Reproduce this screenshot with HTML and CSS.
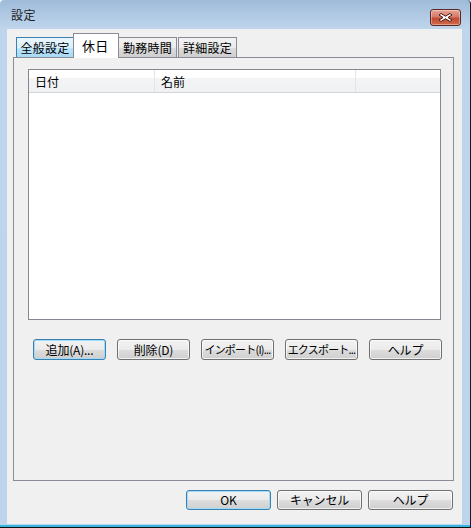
FILE: index.html
```html
<!DOCTYPE html>
<html lang="ja">
<head>
<meta charset="utf-8">
<title>設定</title>
<link rel="stylesheet" href="styles.css">
</head>
<body>
<div class="window">
  <div class="titlebar">
    <span class="title">設定</span>
    <div class="close">
      <svg width="17" height="11" viewBox="0 0 17 11">
        <path d="M4 1.5 L8.5 4.2 L13 1.5 L15 3 L11 5.5 L15 8 L13 9.5 L8.5 6.8 L4 9.5 L2 8 L6 5.5 L2 3 Z" fill="#fff" stroke="#4a1a14" stroke-width="1" stroke-linejoin="round"/>
      </svg>
    </div>
  </div>
  <div class="client">
    <div class="tabs">
      <div class="tab hot">全般設定</div>
      <div class="tab active">休日</div>
      <div class="tab">勤務時間</div>
      <div class="tab">詳細設定</div>
    </div>
    <div class="panel">
      <div class="listview">
        <div class="header">
          <div class="col c1">日付</div>
          <div class="col c2">名前</div>
          <div class="col c3"></div>
        </div>
      </div>
      <div class="btnrow">
        <button class="btn default">追加(A)...</button>
        <button class="btn">削除(D)</button>
        <button class="btn tight">インポート(I)...</button>
        <button class="btn tight">エクスポート...</button>
        <button class="btn">ヘルプ</button>
      </div>
    </div>
    <div class="footer">
      <button class="btn wide default">OK</button>
      <button class="btn wide">キャンセル</button>
      <button class="btn wide">ヘルプ</button>
    </div>
  </div>
</div>
</body>
</html>
```
FILE: styles.css
```css
* { box-sizing: border-box; }
html, body { margin: 0; padding: 0; }
body {
  font-family: "Noto Sans CJK JP", "Noto Sans", sans-serif;
  font-size: 12px;
  color: #000;
  background: #fff;
}
.window {
  width: 471px;
  height: 528px;
  display: flex;
  flex-direction: column;
  background: linear-gradient(to bottom, #9fbbd9 0px, #b3cce6 18px, #bfd5ec 29px, #bcd4ec 100%);
  border-right: 1px solid #1a1a1a;
  border-bottom: 1px solid #111;
  border-top-left-radius: 4px;
  border-top-right-radius: 4px;
  box-shadow: inset 0 -2px 0 #36b6e0;
}
.titlebar {
  height: 29px;
  display: flex;
  align-items: flex-start;
  justify-content: space-between;
  padding: 0 9px 0 11px;
}
.title {
  margin-top: 6px;
  font-size: 12px;
  color: #1e1e1e;
  letter-spacing: 0.5px;
}
.close {
  margin-top: 9px;
  width: 31px;
  height: 17px;
  border: 1px solid #5c2a22;
  border-radius: 3px;
  background: linear-gradient(to bottom, #e8a496 0%, #d57a68 45%, #c24a32 55%, #cf6a4c 100%);
  box-shadow: inset 0 0 0 1px rgba(255,255,255,0.35);
  display: flex;
  align-items: center;
  justify-content: center;
}
.client {
  margin: 0 8px 3px 7px;
  height: 495px;
  background: #f0f0f0;
  display: flex;
  flex-direction: column;
}
.tabs {
  display: flex;
  align-items: flex-end;
  height: 28px;
  padding-left: 9px;
  position: relative;
  z-index: 1;
}
.tab {
  height: 20px;
  padding: 0;
  display: flex;
  align-items: center;
  justify-content: center;
  border: 1px solid #898c95;
  border-bottom: none;
  background: linear-gradient(to bottom, #f2f2f2 0%, #ebebeb 50%, #dddddd 51%, #cfcfcf 100%);
  font-size: 12px;
  letter-spacing: 0.3px;
  white-space: nowrap;
}
.tab + .tab { margin-left: -1px; }
.tab:nth-child(1) { width: 58px; }
.tab:nth-child(2) { width: 46px; }
.tab:nth-child(3) { width: 59px; }
.tab:nth-child(4) { width: 59px; margin-left: 1px; }
.tab.hot {
  border-color: #3c7fb1;
  background: linear-gradient(to bottom, #eaf6fd 0%, #d9f0fc 50%, #bee6fd 51%, #a7d9f5 100%);
}
.tab.active {
  background: #fff;
  border-color: #898c95;
  margin-bottom: -1px;
  height: 25px;
  align-items: flex-start;
  padding-top: 2px;
  justify-content: flex-start;
  padding-left: 8px;
  font-size: 13px;
  position: relative;
  z-index: 2;
}
.panel {
  margin-left: 6px;
  width: 441px;
  height: 424px;
  border: 1px solid #898c95;
  background: #f0f0f0;
  padding: 11px 0 0 14px;
  display: flex;
  flex-direction: column;
}
.listview {
  width: 413px;
  height: 251px;
  border: 1px solid #828790;
  background: #fff;
}
.header {
  display: flex;
  height: 23px;
  border-bottom: 1px solid #d5d5d5;
  background: linear-gradient(to bottom, #ffffff 0%, #ffffff 35%, #f3f4f6 36%, #f0f1f3 100%);
}
.col {
  display: flex;
  align-items: center;
  padding-left: 6px;
  border-right: 1px solid #e3e4e6;
  font-size: 12px;
}
.c1 { width: 126px; }
.c2 { width: 201px; }
.c3 { flex: 1; border-right: none; }
.btnrow {
  display: flex;
  gap: 11px;
  margin-top: 19px;
  padding-left: 5px;
}
.btn {
  font-family: "Noto Sans CJK JP", "Noto Sans", sans-serif;
  font-size: 12px;
  color: #000;
  width: 73px;
  height: 21px;
  padding: 0;
  border: 1px solid #707070;
  border-radius: 3px;
  background: linear-gradient(to bottom, #f2f2f2 0%, #ebebeb 50%, #dddddd 51%, #cfcfcf 100%);
  box-shadow: inset 0 0 0 1px rgba(255,255,255,0.7);
  white-space: nowrap;
  line-height: 19px;
  letter-spacing: -0.2px;
}
.btn.tight {
  font-size: 11px;
  letter-spacing: -0.8px;
}
.btn.default {
  border-color: #3c7fb1;
  box-shadow: inset 0 0 0 1px #9fdcf7;
}
.footer {
  display: flex;
  justify-content: flex-end;
  gap: 6px;
  margin-top: 9px;
  padding-right: 9px;
}
.btn.wide { width: 85px; height: 20px; line-height: 18px; }
```
